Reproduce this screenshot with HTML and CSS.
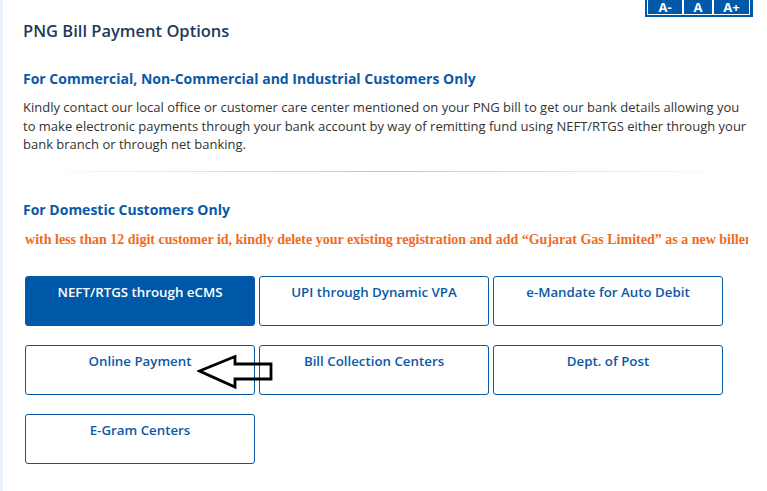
FILE: index.html
```html
<!DOCTYPE html>
<html lang="en">
<head>
  <meta charset="UTF-8">
  <title>PNG Bill Payment Options</title>
  <link rel="stylesheet" href="styles.css">
</head>
<body>
  <div class="page">
    <div class="font-tools">
      <div class="font-tools-inner">
        <button class="font-btn font-small">A-</button>
        <button class="font-btn font-normal">A</button>
        <button class="font-btn font-large">A+</button>
      </div>
    </div>

    <h1 class="page-title">PNG Bill Payment Options</h1>

    <h2 class="section-title">For Commercial, Non-Commercial and Industrial Customers Only</h2>
    <p class="section-text">Kindly contact our local office or customer care center mentioned on your PNG bill to get our bank details allowing you to make electronic payments through your bank account by way of remitting fund using NEFT/RTGS either through your bank branch or through net banking.</p>

    <hr class="divider">

    <h2 class="section-title domestic">For Domestic Customers Only</h2>
    <div class="notice">
      <div class="notice-text">Customers with less than 12 digit customer id, kindly delete your existing registration and add “Gujarat Gas Limited” as a new biller in your bank account</div>
    </div>

    <div class="pay-options">
      <a class="pay-option active" href="#">NEFT/RTGS through eCMS</a>
      <a class="pay-option" href="#">UPI through Dynamic VPA</a>
      <a class="pay-option" href="#">e-Mandate for Auto Debit</a>
      <a class="pay-option" href="#">Online Payment</a>
      <a class="pay-option" href="#">Bill Collection Centers</a>
      <a class="pay-option" href="#">Dept. of Post</a>
      <a class="pay-option" href="#">E-Gram Centers</a>

      <svg class="pointer-arrow" width="78" height="36" viewBox="0 0 78 36">
        <polygon points="2.5,17 38,2.5 38,10 74,10 74,25 38,25 38,33" fill="none" stroke="#000" stroke-width="2.8" stroke-linejoin="miter"/>
      </svg>
    </div>
  </div>
</body>
</html>
```

FILE: styles.css
```css
body {
  margin: 0;
  background-color: #edf3fc;
  font-family: "Open Sans", "Noto Sans", sans-serif;
}
.page {
  margin-left: 3px;
  min-height: 491px;
  background-color: #fff;
  padding: 0 18px 0 20px;
  overflow: hidden;
}
.font-tools {
  display: flex;
  justify-content: flex-end;
  margin-right: -4px;
}
.font-tools-inner {
  display: flex;
  background-color: #0059a8;
  padding: 0 3px 2px 2px;
  margin-top: -9px;
}
.font-btn {
  width: 36px;
  height: 24px;
  padding: 7px 0 0;
  border: 1px solid #fff;
  background-color: #0059a8;
  color: #fff;
  font-family: "Open Sans", sans-serif;
  font-weight: bold;
  font-size: 13px;
  line-height: 14px;
}
.font-normal {
  width: 30px;
}
.font-large {
  width: 37px;
}
.page-title {
  margin: 2px 0 0;
  font-size: 16.5px;
  font-weight: 600;
  line-height: 24px;
  color: #1f3a5c;
}
.section-title {
  margin: 26px 0 0;
  font-size: 14px;
  font-weight: bold;
  line-height: 20px;
  color: #0b59a6;
}
.section-text {
  margin: 9px 0 0;
  font-size: 13px;
  line-height: 18.5px;
  color: #333;
}
.divider {
  margin: 17px 10px 0 10px;
  height: 1px;
  border: 0;
  background: linear-gradient(to right, rgba(176, 200, 214, 0), #b3cad8 50%, rgba(176, 200, 214, 0));
}
.section-title.domestic {
  margin-top: 28px;
}
.notice {
  margin-top: 11px;
  overflow: hidden;
  white-space: nowrap;
  width: 725px;
}
.notice-text {
  margin-left: -66px;
  font-family: "Liberation Serif", serif;
  font-weight: bold;
  font-size: 14px;
  line-height: 18px;
  color: #f26b1d;
}
.pay-options {
  position: relative;
  display: grid;
  grid-template-columns: repeat(3, 230px);
  grid-auto-rows: 50px;
  column-gap: 4px;
  row-gap: 19px;
  margin: 27px 0 0 2px;
}
.pay-option {
  display: block;
  box-sizing: border-box;
  padding-top: 5px;
  border: 1px solid #0b59a6;
  border-radius: 3px;
  text-align: center;
  text-decoration: none;
  font-size: 13.3px;
  font-weight: 600;
  line-height: 20px;
  color: #0b59a6;
}
.pay-option.active {
  background-color: #0059a8;
  color: #fff;
}
.pointer-arrow {
  position: absolute;
  left: 172px;
  top: 78px;
}
```
